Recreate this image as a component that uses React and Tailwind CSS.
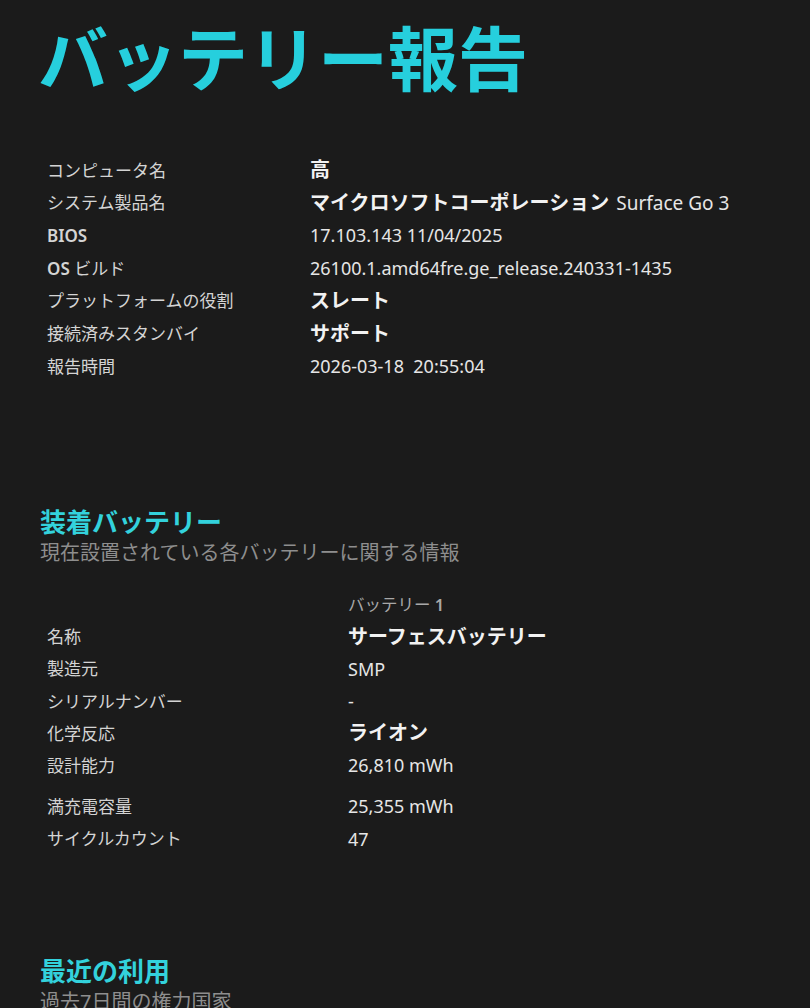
export default function App() {
  const sys = [
    [<span>コンピュータ名</span>, "高", "jp"],
    [<span>システム製品名</span>, null, "mix"],
    [<span className="font-semibold">BIOS</span>, "17.103.143 11/04/2025", "en"],
    [<span><span className="font-semibold">OS</span> ビルド</span>, "26100.1.amd64fre.ge_release.240331-1435", "en"],
    [<span>プラットフォームの役割</span>, "スレート", "jp"],
    [<span>接続済みスタンバイ</span>, "サポート", "jp"],
    [<span>報告時間</span>, "2026-03-18\u00a0\u00a020:55:04", "en"],
  ];
  const bat = [
    ["名称", "サーフェスバッテリー", "jp", ""],
    ["製造元", "SMP", "en", ""],
    ["シリアルナンバー", "-", "en", ""],
    ["化学反応", "ライオン", "jp", ""],
    ["設計能力", "26,810 mWh", "en", ""],
    ["満充電容量", "25,355 mWh", "en", "mt-[9px]"],
    ["サイクルカウント", "47", "en", ""],
  ];
  const valCls = (t) =>
    t === "jp"
      ? "text-[20px] font-semibold text-[#f2f2f2]"
      : "text-[18px] text-[#e6e6e6]";
  return (
    <div
      className="min-h-[1008px] w-[810px] overflow-hidden bg-[#1b1b1b] text-[#d8d8d8]"
      style={{ fontFamily: '"Noto Sans", "Noto Sans CJK JP", sans-serif' }}
    >
      <h1 className="pl-[38px] pt-[14px] text-[70px] font-bold leading-[90px] text-[#26cfdd]">
        バッテリー報告
      </h1>
      <div className="mt-[50px] flex flex-col pl-[47px]">
        {sys.map(([k, v, t], i) => (
          <div key={i} className="flex h-[32.7px] items-center">
            <div className="w-[263px] text-[17px] text-[#d4d4d4]">{k}</div>
            {t === "mix" ? (
              <div className="flex items-baseline gap-[7px]">
                <span className="text-[20px] font-semibold text-[#f2f2f2]">
                  マイクロソフトコーポレーション
                </span>
                <span className="text-[19px] text-[#e6e6e6]">Surface Go 3</span>
              </div>
            ) : (
              <div className={valCls(t)}>{v}</div>
            )}
          </div>
        ))}
      </div>
      <div className="mt-[123px] pl-[40px]">
        <h2 className="text-[26px] font-bold leading-[32px] text-[#33d2dc]">装着バッテリー</h2>
        <p className="text-[20px] leading-[30px] text-[#8e8e8e]">
          現在設置されている各バッテリーに関する情報
        </p>
      </div>
      <div className="mt-[23px] flex flex-col pl-[47px]">
        <div className="flex h-[30px] items-center">
          <div className="w-[301px]" />
          <div className="text-[16.5px] text-[#a8a8a8]">
            バッテリー <span className="font-semibold">1</span>
          </div>
        </div>
        {bat.map(([k, v, t, m], i) => (
          <div key={i} className={`flex h-[32.2px] items-center ${m}`}>
            <div className="w-[301px] text-[17px] text-[#d4d4d4]">{k}</div>
            <div className={valCls(t)}>{v}</div>
          </div>
        ))}
      </div>
      <div className="mt-[100px] pl-[40px]">
        <h2 className="text-[26px] font-bold leading-[32px] text-[#33d2dc]">最近の利用</h2>
        <p className="text-[20px] leading-[30px] text-[#8e8e8e]">過去7日間の権力国家</p>
      </div>
    </div>
  );
}
